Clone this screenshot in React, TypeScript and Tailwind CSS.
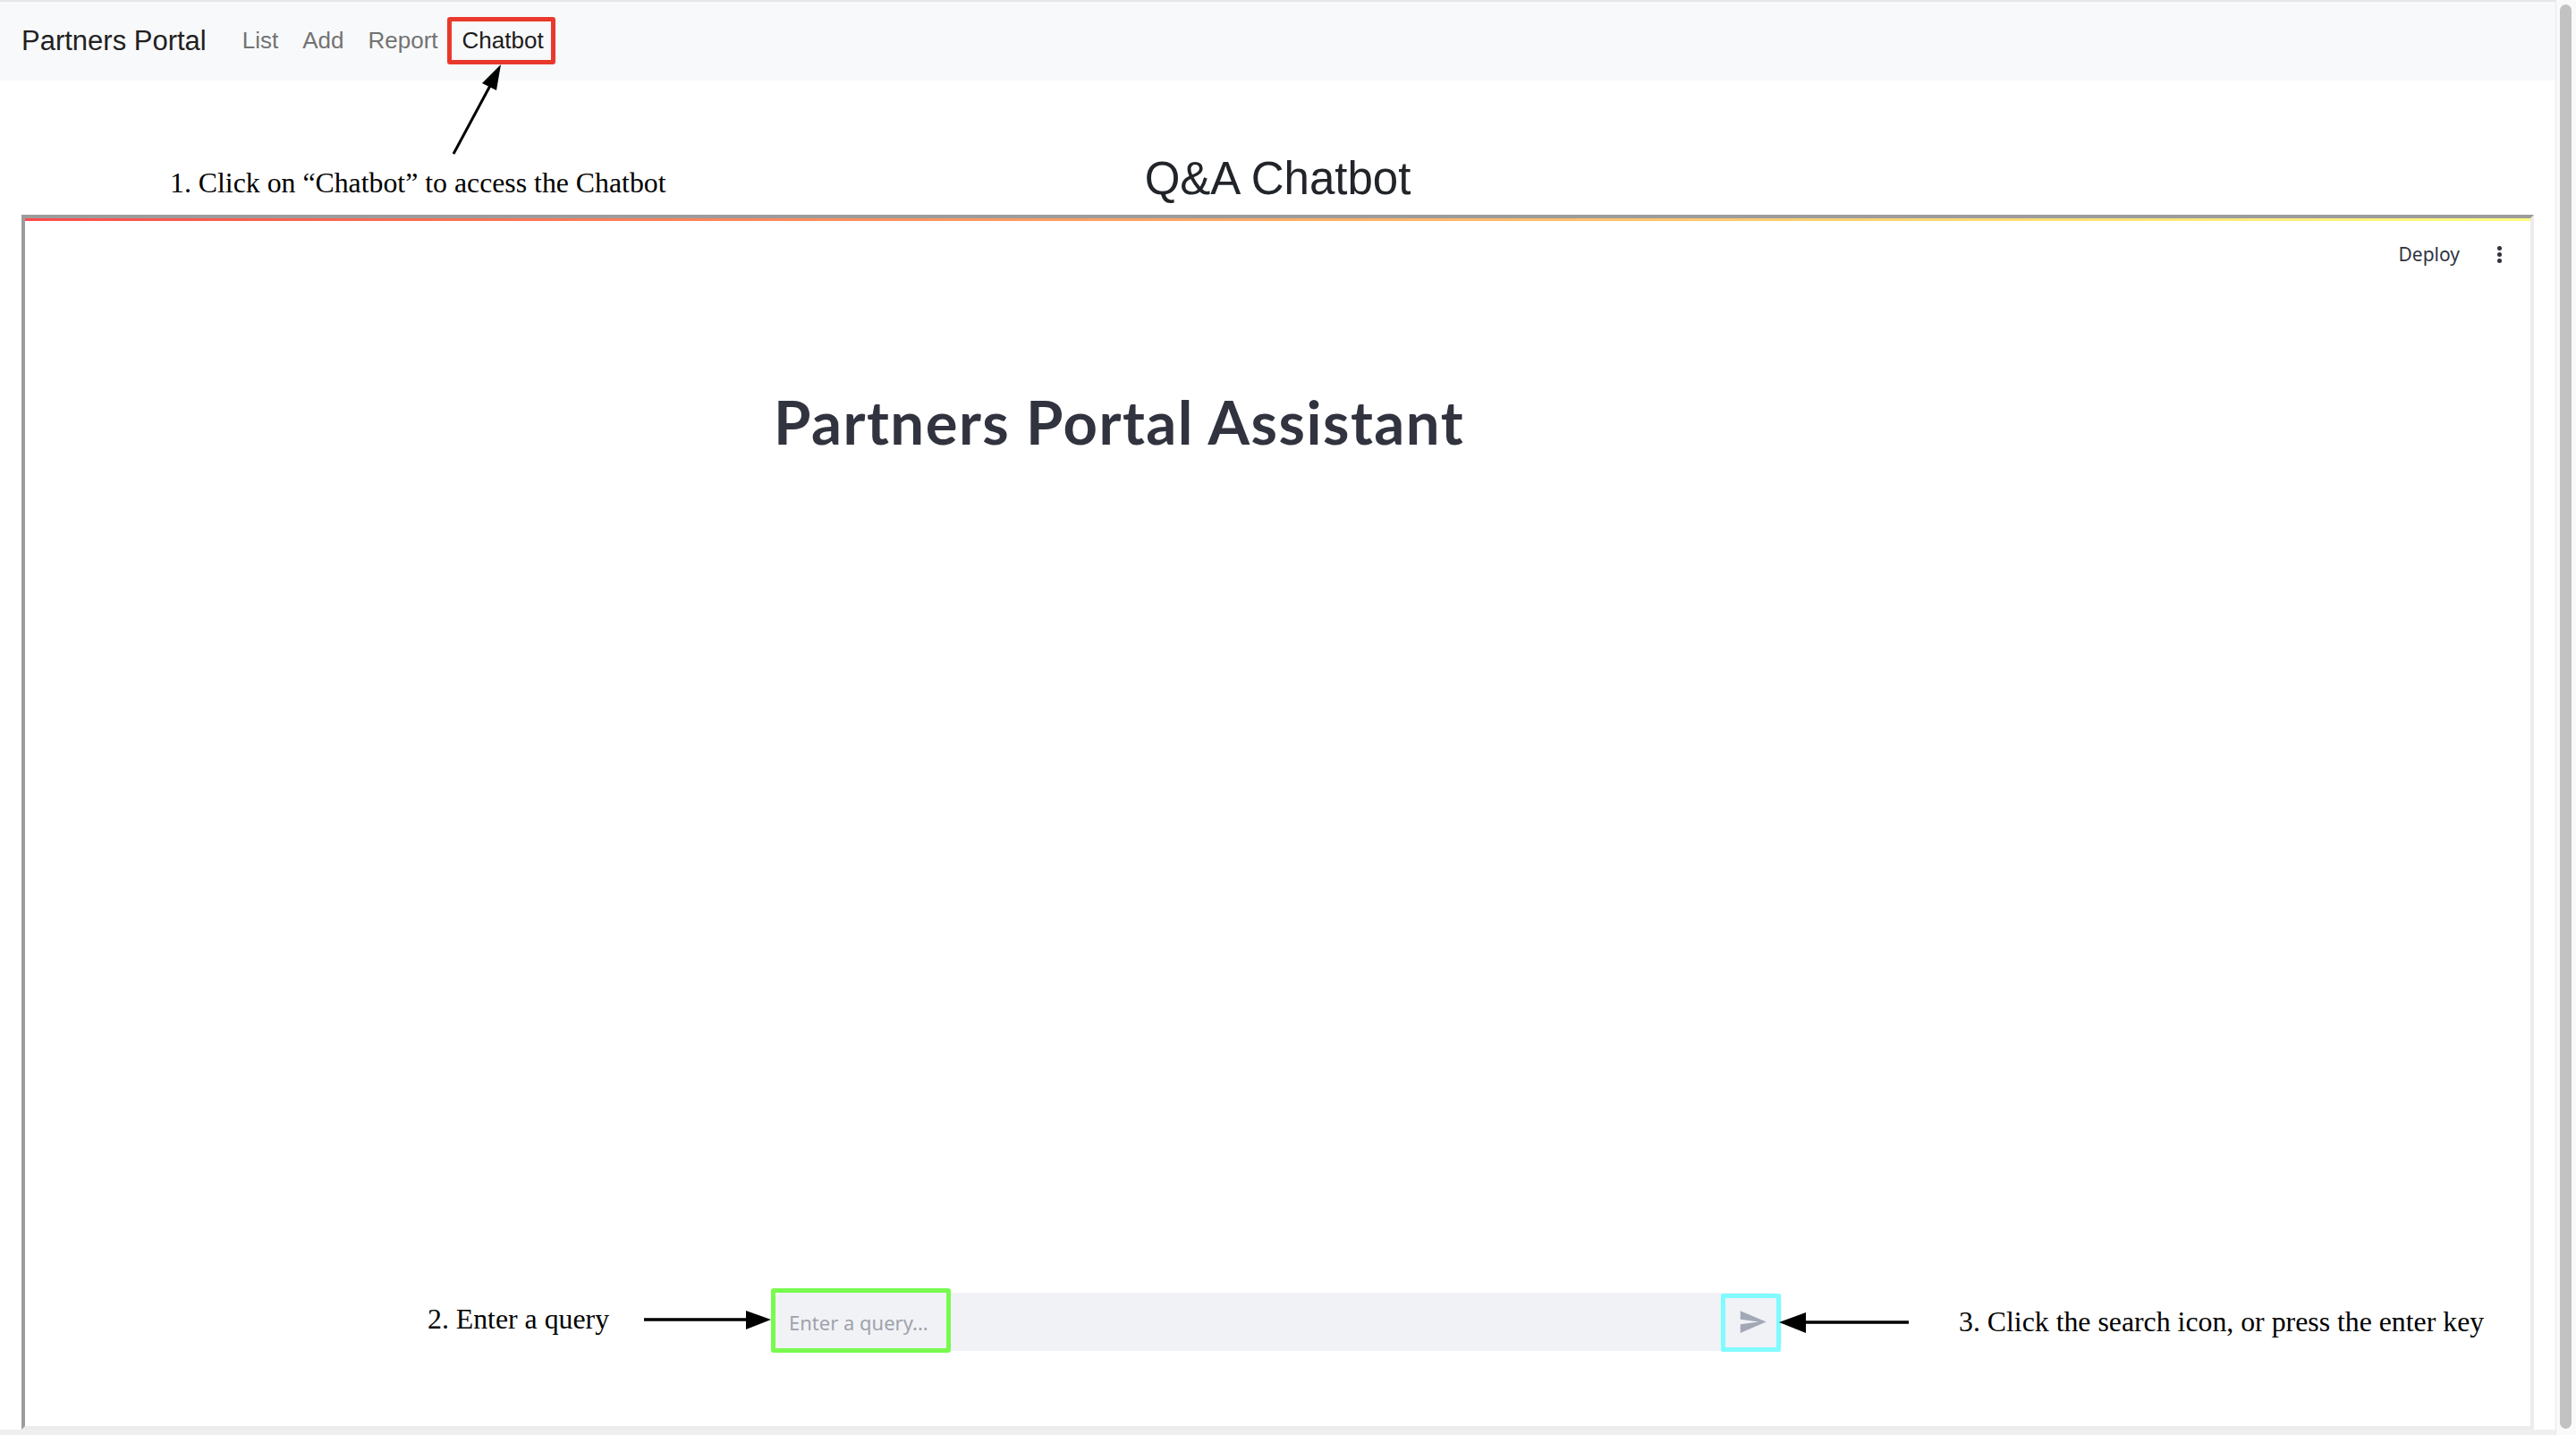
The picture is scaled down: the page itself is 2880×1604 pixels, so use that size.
import React from "react";

const navLinks = ["List", "Add", "Report"];

const SendIcon = () => (
  <svg viewBox="0 0 24 24" className="w-[33px] h-[33px]" fill="#a3a8b7">
    <path d="M2.01 21L23 12 2.01 3 2 10l15 2-15 2z" />
  </svg>
);

const Kebab = () => (
  <div className="flex flex-col items-center gap-[2px]">
    <span className="w-[5px] h-[5px] rounded-full bg-[#31333f]" />
    <span className="w-[5px] h-[5px] rounded-full bg-[#31333f]" />
    <span className="w-[5px] h-[5px] rounded-full bg-[#31333f]" />
  </div>
);

const App = () => {
  return (
    <div className="relative w-[2880px] h-[1604px] overflow-hidden bg-white flex">
      {/* page */}
      <div className="w-[2857px] flex flex-col">
        <nav className="h-[90px] border-t-2 border-[#e6e6e6] bg-[#f8f9fa] flex items-center pl-[24px] font-['Liberation_Sans',Arial,sans-serif]">
          <span className="text-[31px] leading-[1.2] text-[#212121] mr-[40px]">
            Partners Portal
          </span>
          <div className="flex items-center gap-[27px] text-[26px] leading-[1.2]">
            {navLinks.map((l) => (
              <span key={l} className="text-[#737373]">
                {l}
              </span>
            ))}
            <span className="text-[#1c1c1c]">Chatbot</span>
          </div>
        </nav>

        <div className="h-[150px] pt-[80px] text-center">
          <h2 className="text-[51px] leading-[60px] text-[#212529] font-['Liberation_Sans',Arial,sans-serif]">
            Q&amp;A Chatbot
          </h2>
        </div>

        {/* streamlit frame */}
        <div className="mx-[24px] h-[1358px] border-4 border-t-[#9c9c9c] border-l-[#9c9c9c] border-r-[#ececec] border-b-[#ececec] flex flex-col">
          <div className="h-[3px] bg-gradient-to-r from-[#ff4b4b] to-[#fffd80]" />
          <div className="flex items-center justify-end pt-[23px] pr-[32px] gap-[42px]">
            <span className="text-[21px] leading-[28px] text-[#31333f] font-['Noto_Sans',sans-serif]">
              Deploy
            </span>
            <Kebab />
          </div>
          <div className="w-[1127px] mx-auto mt-[133px]">
            <h1 className="text-[67px] leading-[1.2] font-bold tracking-[1.5px] text-[#31333f] font-['Lato',sans-serif]">
              Partners Portal Assistant
            </h1>
          </div>
          <div className="flex-1" />
          <div className="w-[1127px] mx-auto mb-[84px] h-[65px] rounded-[10px] bg-[#f0f2f6] flex items-center">
            <span className="flex-1 pl-[17px] text-[22px] leading-[30px] text-[#a0a2aa] font-['Noto_Sans',sans-serif]">
              Enter a query...
            </span>
            <div className="w-[66px] h-full flex items-center justify-center">
              <SendIcon />
            </div>
          </div>
        </div>
        <div className="h-[6px] bg-[#efefef]" />
      </div>

      {/* scrollbar */}
      <div className="w-[23px] border-l border-[#e8e8e8] bg-[#fafafa] pt-[5px] pl-[4px]">
        <div className="w-[13px] h-[1592px] rounded-full bg-[#c2c2c2]" />
      </div>

      {/* annotations */}
      <div className="absolute left-[500px] top-[19px] w-[121px] h-[53px] border-[5px] border-[#e8392c] rounded-[3px]" />
      <div className="absolute left-[862px] top-[1440px] w-[201px] h-[72px] border-[5px] border-[#78fa4f] rounded-[3px]" />
      <div className="absolute left-[1924px] top-[1446px] w-[67px] h-[65px] border-[5px] border-[#80fbff] rounded-[2px]" />

      <span className="absolute left-[190px] top-[189px] text-[31.8px] leading-[32px] text-black whitespace-nowrap font-['Liberation_Serif','Times_New_Roman',serif]">
        1. Click on “Chatbot” to access the Chatbot
      </span>
      <span className="absolute left-[478px] top-[1459px] text-[31.8px] leading-[32px] text-black whitespace-nowrap font-['Liberation_Serif','Times_New_Roman',serif]">
        2. Enter a query
      </span>
      <span className="absolute left-[2190px] top-[1462px] text-[31.8px] leading-[32px] text-black whitespace-nowrap font-['Liberation_Serif','Times_New_Roman',serif]">
        3. Click the search icon, or press the enter key
      </span>

      <svg className="absolute left-0 top-0 pointer-events-none" width="2880" height="1604">
        <line x1="507" y1="172" x2="550" y2="92" stroke="#000" strokeWidth="3" />
        <polygon points="560,72 555,101 539,93" fill="#000" />
        <line x1="720" y1="1475" x2="836" y2="1475" stroke="#000" strokeWidth="3.5" />
        <polygon points="834,1465 834,1486 862,1475" fill="#000" />
        <line x1="2134" y1="1478" x2="2017" y2="1478" stroke="#000" strokeWidth="3.5" />
        <polygon points="2019,1467 2019,1490 1989,1478" fill="#000" />
      </svg>
    </div>
  );
};

export default App;
